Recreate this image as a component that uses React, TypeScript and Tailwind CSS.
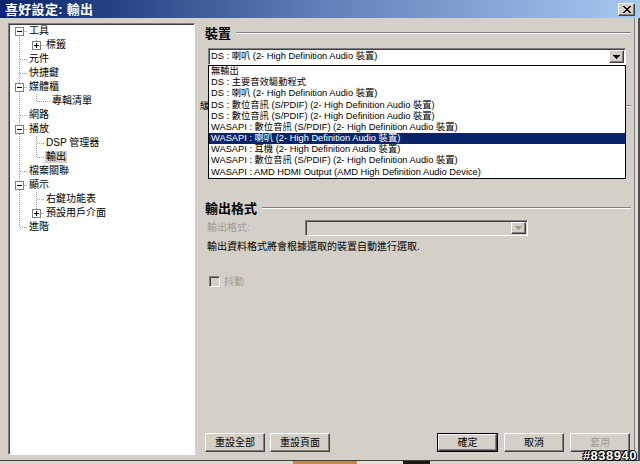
import React from 'react';

const raised =
  'bg-[#d4d0c8] border border-t-white border-l-white border-r-[#404040] border-b-[#404040] shadow-[inset_-1px_-1px_0_#808080]';
const sunken =
  'border border-t-[#808080] border-l-[#808080] border-r-white border-b-white shadow-[inset_1px_1px_0_#404040]';

type Row = {
  label: string;
  d: number;
  cont: boolean[];
  last?: boolean;
  first?: boolean;
  kids?: 'open' | 'closed';
  selected?: boolean;
  tail?: number;
};

const tree: Row[] = [
  { label: '工具', d: 0, cont: [], first: true, kids: 'open' },
  { label: '標籤', d: 1, cont: [true], last: true, kids: 'closed' },
  { label: '元件', d: 0, cont: [] },
  { label: '快捷鍵', d: 0, cont: [] },
  { label: '媒體櫃', d: 0, cont: [], kids: 'open' },
  { label: '專輯清單', d: 1, cont: [true], last: true, tail: 6 },
  { label: '網路', d: 0, cont: [] },
  { label: '播放', d: 0, cont: [], kids: 'open' },
  { label: 'DSP 管理器', d: 1, cont: [true] },
  { label: '輸出', d: 1, cont: [true], last: true, selected: true },
  { label: '檔案關聯', d: 0, cont: [] },
  { label: '顯示', d: 0, cont: [], kids: 'open' },
  { label: '右鍵功能表', d: 1, cont: [true] },
  { label: '預設用戶介面', d: 1, cont: [true], last: true, kids: 'closed' },
  { label: '進階', d: 0, cont: [], last: true },
];

const devices = [
  '無輸出',
  'DS : 主要音效驅動程式',
  'DS : 喇叭 (2- High Definition Audio 裝置)',
  'DS : 數位音訊 (S/PDIF) (2- High Definition Audio 裝置)',
  'DS : 數位音訊 (S/PDIF) (2- High Definition Audio 裝置)',
  'WASAPI : 數位音訊 (S/PDIF) (2- High Definition Audio 裝置)',
  'WASAPI : 喇叭 (2- High Definition Audio 裝置)',
  'WASAPI : 耳機 (2- High Definition Audio 裝置)',
  'WASAPI : 數位音訊 (S/PDIF) (2- High Definition Audio 裝置)',
  'WASAPI : AMD HDMI Output (AMD High Definition Audio Device)',
];

function Guides({ row }: { row: Row }) {
  const n = 10 + 17 * row.d;
  const cx = n + 0.5;
  const w = n + 8 + (row.tail ?? 0);
  return (
    <svg width={w} height={14} className="shrink-0" shapeRendering="crispEdges">
      <g stroke="#a0a0a0" strokeDasharray="1 1">
        {row.cont.map((c, k) =>
          c ? <line key={k} x1={10 + 17 * k + 0.5} x2={10 + 17 * k + 0.5} y1={0} y2={14} /> : null
        )}
        <line x1={cx} x2={cx} y1={row.first ? 7 : 0} y2={row.last ? 8 : 14} />
        <line x1={cx} x2={w} y1={7.5} y2={7.5} />
      </g>
      {row.kids && (
        <g>
          <rect x={n - 3.5} y={3.5} width={8} height={8} fill="#fff" stroke="#808080" />
          <line x1={n - 2} x2={n + 3} y1={7.5} y2={7.5} stroke="#000" />
          {row.kids === 'closed' && <line x1={cx} x2={cx} y1={5} y2={10} stroke="#000" />}
        </g>
      )}
    </svg>
  );
}

function Arrow({ color = '#000' }: { color?: string }) {
  return (
    <svg width="7" height="4" viewBox="0 0 7 4" shapeRendering="crispEdges">
      <path d="M0 0h7v1H0zM1 1h5v1H1zM2 2h3v1H2zM3 3h1v1H3z" fill={color} />
    </svg>
  );
}

function Heading({ title }: { title: string }) {
  return (
    <div className="flex items-center h-[14px] pl-[10px] pr-[3px]">
      <span className="text-[13px] font-bold leading-none text-black">{title}</span>
      <div className="flex-1 ml-[5px] border-t border-t-[#808080] border-b border-b-white" />
    </div>
  );
}

function Button({ label, disabled }: { label: string; disabled?: boolean }) {
  return (
    <div
      className={`${raised} h-[19px] w-[60px] flex items-center justify-center text-[10px] leading-none ${
        disabled ? 'text-[#a09d96]' : 'text-black'
      }`}
    >
      {label}
    </div>
  );
}

export default function App() {
  return (
    <div className="w-[640px] h-[464px] bg-[#d4d0c8] flex flex-col overflow-hidden relative font-['Liberation_Sans','Noto_Sans_CJK_TC',sans-serif] text-black">
      {/* Title bar */}
      <div className="h-[18px] shrink-0 flex items-center justify-between pl-[5px] pr-[5px] bg-linear-to-r from-[#0a246a] via-[#5f80b8] to-[#a6caf0]">
        <span className="text-white text-[13px] font-bold leading-none tracking-[0.3px]">喜好設定: 輸出</span>
        <div className={`${raised} w-[17px] h-[13px] flex items-center justify-center`}>
          <svg width="8" height="7" viewBox="0 0 8 7" shapeRendering="crispEdges">
            <path
              d="M0 0h2v1H0zM6 0h2v1H6zM1 1h2v1H1zM5 1h2v1H5zM2 2h4v1H2zM3 3h2v1H3zM2 4h4v1H2zM1 5h2v1H1zM5 5h2v1H5zM0 6h2v1H0zM6 6h2v1H6z"
              fill="#000"
            />
          </svg>
        </div>
      </div>

      <div className="flex flex-1 min-h-0">
        {/* Tree */}
        <div className="pl-[8px] pt-[5px] pb-[5px] shrink-0">
          <div className={`${sunken} w-[187px] h-full bg-white pt-0`}>
            {tree.map((row, i) => (
              <div key={i} className="flex items-center h-[14px]">
                <Guides row={row} />
                <span
                  className={`ml-[1px] px-[1px] text-[10px] leading-[12px] whitespace-nowrap ${
                    row.selected ? 'bg-[#d4d0c8]' : ''
                  }`}
                >
                  {row.label}
                </span>
              </div>
            ))}
          </div>
        </div>

        {/* Right page */}
        <div className="flex-1 flex flex-col pt-[8px] pb-[8px]">
          <Heading title="裝置" />

          <div className="relative mt-[8px] ml-[13px] w-[418px] z-10">
            <div className={`${sunken} h-[17px] bg-white flex items-center pl-[2px]`}>
              <span className="flex-1 text-[9.3px] leading-none whitespace-nowrap">
                DS : 喇叭 (2- High Definition Audio 裝置)
              </span>
              <div className={`${raised} w-[15px] h-[13px] mr-[1px] flex items-center justify-center`}>
                <Arrow />
              </div>
            </div>
            <div className="absolute left-0 right-0 top-full h-[114px] bg-white border border-black">
              {devices.map((d, i) => (
                <div
                  key={i}
                  className={`h-[11.2px] flex items-center pl-[2px] text-[9.3px] leading-none whitespace-nowrap ${
                    i === 6 ? 'bg-[#0a246a] text-white' : ''
                  }`}
                >
                  {d}
                </div>
              ))}
            </div>
          </div>

          {/* label hidden behind the open list: only its first glyph shows */}
          <div className="flex items-center h-[14px] mt-[34px] pl-[5px] pr-[3px]">
            <span className="w-[8px] overflow-hidden text-[10px] leading-none whitespace-nowrap">緩</span>
            <div className="flex-1 ml-[5px] border-t border-t-[#808080] border-b border-b-white" />
          </div>

          <div className="mt-[88px]">
            <Heading title="輸出格式" />
          </div>

          <div className="flex items-center mt-[5px] pl-[12px] h-[16px]">
            <span className="w-[98px] text-[10px] leading-none text-[#a09d96]">輸出格式:</span>
            <div className={`${sunken} w-[223px] h-[16px] bg-[#d4d0c8] flex items-center justify-end pr-[1px]`}>
              <div className={`${raised} w-[15px] h-[12px] flex items-center justify-center`}>
                <Arrow color="#a09d96" />
              </div>
            </div>
          </div>

          <div className="mt-[5px] pl-[12px] h-[12px] flex items-center text-[10px] leading-none">
            輸出資料格式將會根據選取的裝置自動進行選取.
          </div>

          <div className="mt-[23px] pl-[14px] flex items-center h-[11px]">
            <div className={`${sunken} w-[11px] h-[11px] bg-[#d4d0c8]`} />
            <span className="ml-[4px] text-[10px] leading-none text-[#a09d96]">抖動</span>
          </div>

          <div className="mt-auto flex items-center pl-[10px] pr-[4px]">
            <div className="flex gap-[5px]">
              <Button label="重設全部" />
              <Button label="重設頁面" />
            </div>
            <div className="ml-auto flex gap-[6px]">
              <div className="border border-black">
                <div className="bg-[#d4d0c8] border border-t-white border-l-white border-r-[#404040] border-b-[#404040] shadow-[inset_-1px_-1px_0_#808080] h-[17px] w-[59px] flex items-center justify-center text-[10px] leading-none">
                  確定
                </div>
              </div>
              <Button label="取消" />
              <Button label="套用" disabled />
            </div>
          </div>
        </div>

        {/* Right frame */}
        <div className="w-[6px] shrink-0 bg-[#dedad2] border-l border-l-[#808080] border-r-2 border-r-[#505050]" />
      </div>

      {/* Bottom frame and the photo behind the window */}
      <div className="h-[1px] shrink-0 bg-[#404040]" />
      <div className="h-[3px] shrink-0 flex">
        <div className="w-[293px] bg-[#dcd8d0]" />
        <div className="w-[64px] bg-[#c8864a]" />
        <div className="w-[46px] bg-[#e4e0d8]" />
        <div className="w-[27px] bg-[#201810]" />
        <div className="flex-1 bg-[#d8d4cc]" />
      </div>

      {/* Watermark */}
      <div className="absolute right-[3px] bottom-[2px] text-[13px] font-bold leading-none text-white tracking-[0.5px] font-['Liberation_Sans',sans-serif] [text-shadow:-1px_0_#000,1px_0_#000,0_-1px_#000,0_1px_#000,1px_1px_#000,-1px_-1px_#000]">
        #838940
      </div>
    </div>
  );
}
